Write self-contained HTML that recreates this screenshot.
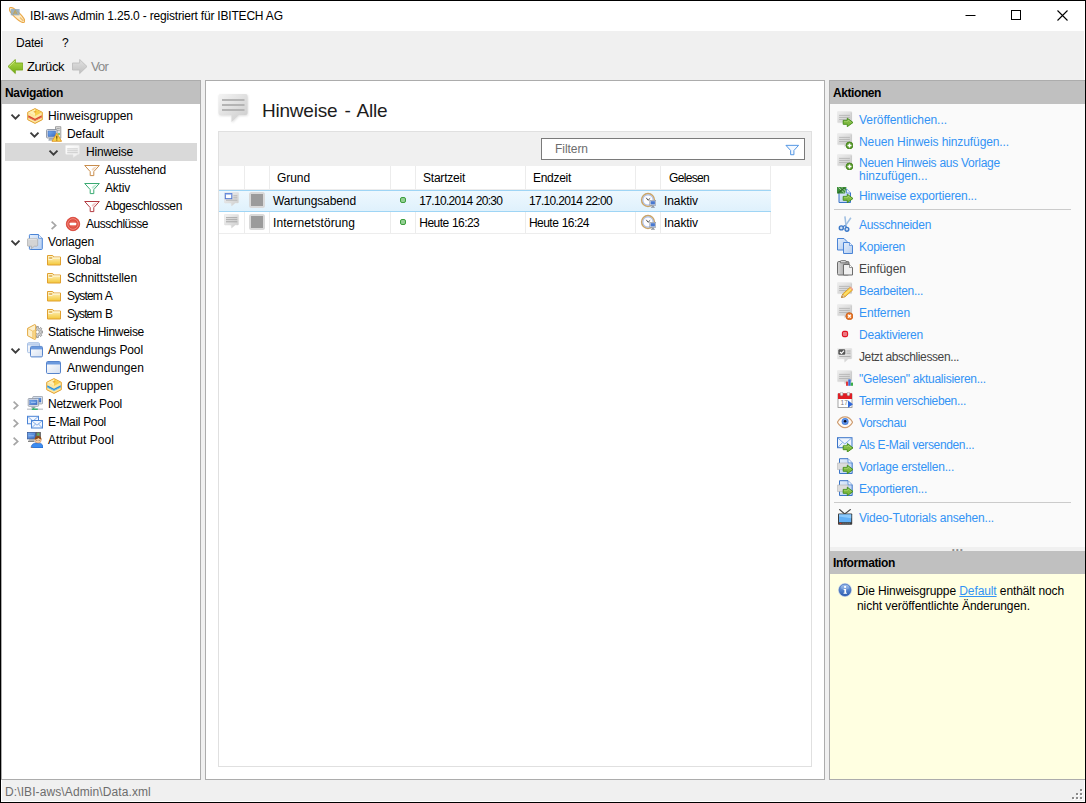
<!DOCTYPE html>
<html lang="de"><head><meta charset="utf-8"><title>IBI-aws Admin</title>
<style>
html,body{margin:0;padding:0}
body{width:1086px;height:803px;position:relative;overflow:hidden;background:#f0f0f0;font-family:"Liberation Sans", sans-serif;font-size:12px;color:#000}
.t{position:absolute;white-space:nowrap}
</style></head><body>
<svg width="0" height="0" style="position:absolute"><defs>
<linearGradient id="gBub" x1="0" y1="0" x2="1" y2="1"><stop offset="0" stop-color="#f4f4f4"/><stop offset="1" stop-color="#cbcbcb"/></linearGradient>
<linearGradient id="gBub2" x1="0" y1="0" x2=".6" y2="1"><stop offset="0" stop-color="#efefef"/><stop offset="1" stop-color="#cacaca"/></linearGradient>
<linearGradient id="gBubW" x1="0" y1="0" x2="1" y2="1"><stop offset="0" stop-color="#ffffff"/><stop offset="1" stop-color="#ececec"/></linearGradient>
<linearGradient id="gFold" x1="0" y1="0" x2="0" y2="1"><stop offset="0" stop-color="#fff6d0"/><stop offset="1" stop-color="#f4c838"/></linearGradient>
<linearGradient id="gGreen" x1="0" y1="0" x2="0" y2="1"><stop offset="0" stop-color="#b4dc50"/><stop offset="1" stop-color="#72ac14"/></linearGradient>
<linearGradient id="gGray" x1="0" y1="0" x2="0" y2="1"><stop offset="0" stop-color="#e2e2e2"/><stop offset="1" stop-color="#c0c0c0"/></linearGradient>
<linearGradient id="gWin" x1="0" y1="0" x2="1" y2="1"><stop offset="0" stop-color="#ffffff"/><stop offset="1" stop-color="#d4dff0"/></linearGradient>
<linearGradient id="gDoc" x1="0" y1="0" x2="1" y2="1"><stop offset="0" stop-color="#e4eefb"/><stop offset="1" stop-color="#b4cdf0"/></linearGradient>
<radialGradient id="gRed" cx=".5" cy=".5" r=".55"><stop offset="0" stop-color="#f07a6a"/><stop offset="1" stop-color="#d83c30"/></radialGradient>
<linearGradient id="gBlue" x1="0" y1="0" x2="0" y2="1"><stop offset="0" stop-color="#7eaae8"/><stop offset="1" stop-color="#2c5cb0"/></linearGradient>
<linearGradient id="gMon" x1="0" y1="0" x2="1" y2="1"><stop offset="0" stop-color="#78aef0"/><stop offset="1" stop-color="#3a6cc4"/></linearGradient>
<linearGradient id="gOr" x1="0" y1="0" x2="1" y2="1"><stop offset="0" stop-color="#fff4d0"/><stop offset="1" stop-color="#f4c060"/></linearGradient>
<linearGradient id="gClip" x1="0" y1="0" x2="1" y2="0"><stop offset="0" stop-color="#d8d8d8"/><stop offset="1" stop-color="#8c8c8c"/></linearGradient>
<linearGradient id="gSel" x1="0" y1="0" x2="0" y2="1"><stop offset="0" stop-color="#f1f9fe"/><stop offset="1" stop-color="#dcf0fc"/></linearGradient>
</defs></svg>
<div style="position:absolute;left:0px;top:0px;width:1086px;height:803px;background:#000;"></div>
<div style="position:absolute;left:1px;top:1px;width:1084px;height:801px;background:#fff;"></div>
<div style="position:absolute;left:2px;top:31px;width:1082px;height:770px;background:#f0f0f0;"></div>
<svg style="position:absolute;left:9px;top:7px;" width="16" height="16" viewBox="0 0 16 16"><ellipse cx="8" cy="8" rx="10.200" ry="3.100" transform="rotate(44 8 8)" fill="#fdebc8" stroke="#eaa848" stroke-width="1"/><rect x="1.800" y="2" width="8.800" height="6.300" fill="#8fa9bd" opacity=".85"/><path d="M4.300 7.300 6.200 3.300 8.100 7.300M5 6h2.400" stroke="#c8a040" stroke-width=".8" fill="none"/><path d="M11 10.500 14.500 14" stroke="#f0c070" stroke-width="1.500"/></svg>
<span id="t1" class="t" style="left:30px;top:7.5px;line-height:16px;letter-spacing:-0.19px;">IBI-aws Admin 1.25.0 - registriert für IBITECH AG</span>
<svg style="position:absolute;left:948px;top:0" width="138" height="30" viewBox="0 0 138 30"><path d="M17.500 15.500h10" stroke="#000" stroke-width="1"/><rect x="63.500" y="10.500" width="9" height="9" fill="none" stroke="#000" stroke-width="1"/><path d="M109.500 10.500l10 10M119.500 10.500l-10 10" stroke="#000" stroke-width="1.100"/></svg>
<span id="t2" class="t" style="left:16px;top:35.0px;line-height:16px;letter-spacing:-0.2px;">Datei</span>
<span id="t3" class="t" style="left:62px;top:35.0px;line-height:16px;">?</span>
<svg style="position:absolute;left:7px;top:59px;" width="16" height="16" viewBox="0 0 16 16"><path d="M8.300 .5 1 7.500l7.300 7V11h7.500V4H8.300z" fill="url(#gGreen)" stroke="#78a81e" stroke-width=".9" stroke-linejoin="round"/><path d="M8 2 2.300 7.500" stroke="#d4ec90" stroke-width=".8" fill="none"/></svg>
<span id="t4" class="t" style="left:27px;top:58.5px;line-height:16px;font-size:13px;letter-spacing:-0.46px;">Zurück</span>
<svg style="position:absolute;left:71px;top:59px;" width="16" height="16" viewBox="0 0 16 16"><path d="M8.700 .5 16 7.500l-7.300 7V11H1.500V4H8.700z" fill="url(#gGray)" stroke="#bdbdbd" stroke-width=".9" stroke-linejoin="round"/></svg>
<span id="t5" class="t" style="left:91px;top:58.5px;line-height:16px;font-size:13px;color:#8a8a8a;letter-spacing:-0.84px;">Vor</span>
<div style="position:absolute;left:1px;top:80px;width:200px;height:700px;background:#acacac;"></div>
<div style="position:absolute;left:2px;top:81px;width:198px;height:698px;background:#fff;"></div>
<div style="position:absolute;left:2px;top:81px;width:198px;height:23px;background:#c0c0c0;"></div>
<span id="t6" class="t" style="left:5px;top:85.0px;line-height:16px;font-weight:bold;letter-spacing:-0.33px;">Navigation</span>
<svg style="position:absolute;left:9px;top:110px" width="12" height="12" viewBox="0 0 12 12"><path d="M2.50 4.70L6.50 8.70L10.50 4.70" fill="none" stroke="#3c3c3c" stroke-width="1.900"/></svg>
<svg style="position:absolute;left:27px;top:108px;" width="16" height="16" viewBox="0 0 16 16"><path d="M8 .600 15.300 4.300v7.400L8 15.400 .7 11.700V4.300z" fill="#fde7a0" stroke="#e0a030" stroke-width="1" stroke-linejoin="round"/>
<path d="M8 1.200 14.600 4.500 8 7.900 1.400 4.500z" fill="#f8cf4c"/><path d="M8 1.200 8 7.900 1.400 4.500z" fill="#fdeeb4"/>
<path d="M1.300 7.300 8 10.700l6.700-3.400v1.900L8 12.600 1.300 9.200z" fill="#d8452e"/>
<path d="M1.300 8.700 8 12.100l6.700-3.400v1L8 13.100 1.300 9.700z" fill="#e87858"/>
<path d="M6.300 3.700 8 2.900l1.700.8L8 4.700z" fill="#e9a52c"/></svg>
<span id="t7" class="t" style="left:48px;top:108.0px;line-height:16px;letter-spacing:-0.08px;">Hinweisgruppen</span>
<svg style="position:absolute;left:28px;top:128px" width="12" height="12" viewBox="0 0 12 12"><path d="M2.50 4.70L6.50 8.70L10.50 4.70" fill="none" stroke="#3c3c3c" stroke-width="1.900"/></svg>
<svg style="position:absolute;left:46px;top:126px;" width="16" height="16" viewBox="0 0 16 16"><path d="M9.500 .7h5.300v11.500H9.500z" fill="#e0e0e0" stroke="#8e8e8e" stroke-width=".8"/><path d="M10.500 2.500h3.300M10.500 4.300h3.300" stroke="#9a9a9a" stroke-width=".8"/><circle cx="13" cy="8" r=".9" fill="#4ab84a"/>
<rect x=".5" y="3.500" width="10.500" height="8.500" rx="1" fill="#dfe3ea" stroke="#7f8896" stroke-width=".8"/><rect x="2" y="5" width="7.500" height="5.500" fill="url(#gMon)" stroke="#3a62b0" stroke-width=".5"/>
<path d="M3.500 12.500h4.500l.8 1.800H2.700z" fill="#b4bac4" stroke="#7f8896" stroke-width=".5"/>
<path d="M10.800 7.200 15.600 15.300H6z" fill="#fbd548" stroke="#e0982a" stroke-width=".9" stroke-linejoin="round"/><path d="M10.800 9.800v3M10.800 13.500v.9" stroke="#6a4200" stroke-width="1.100"/></svg>
<span id="t8" class="t" style="left:67px;top:126.0px;line-height:16px;letter-spacing:-0.15px;">Default</span>
<div style="position:absolute;left:5px;top:143px;width:192px;height:18px;background:#d9d9d9;"></div>
<svg style="position:absolute;left:47px;top:146px" width="12" height="12" viewBox="0 0 12 12"><path d="M2.50 4.70L6.50 8.70L10.50 4.70" fill="none" stroke="#3c3c3c" stroke-width="1.900"/></svg>
<svg style="position:absolute;left:65px;top:144px;" width="16" height="16" viewBox="0 0 16 16"><path d="M1.200 1.200h12.400a.8.800 0 0 1 .8.800v7.600a.8.800 0 0 1-.8.800H12.800L8.300 13.600 8 10.400H1.200a.8.800 0 0 1-.8-.8V2a.8.800 0 0 1 .8-.8z" fill="url(#gBubW)" stroke="#e4e4e4" stroke-width=".4"/>
<path d="M2.200 4.900h10.600M2.200 6.800h10.600M2.200 8.700h10.600" stroke="#bdbdbd" stroke-width=".75"/></svg>
<span id="t9" class="t" style="left:86px;top:144.0px;line-height:16px;letter-spacing:-0.21px;">Hinweise</span>
<svg style="position:absolute;left:84px;top:162px;" width="16" height="16" viewBox="0 0 16 16"><path d="M.7 3.500H15.300L9.800 9.600V13.600H6.200V9.600z" fill="#fff" stroke="#c98d4c" stroke-width="1" stroke-linejoin="miter"/><path d="M9 9 13.200 4.200 9.500 5.500 7.500 7.500z" fill="#e8b888" opacity=".55"/></svg>
<span id="t10" class="t" style="left:105px;top:162.0px;line-height:16px;letter-spacing:-0.24px;">Ausstehend</span>
<svg style="position:absolute;left:84px;top:180px;" width="16" height="16" viewBox="0 0 16 16"><path d="M.7 3.500H15.300L9.800 9.600V13.600H6.200V9.600z" fill="#fff" stroke="#3aaa72" stroke-width="1" stroke-linejoin="miter"/><path d="M9 9 13.200 4.200 9.500 5.500 7.500 7.500z" fill="#8edcb0" opacity=".55"/></svg>
<span id="t11" class="t" style="left:105px;top:180.0px;line-height:16px;letter-spacing:-0.2px;">Aktiv</span>
<svg style="position:absolute;left:84px;top:198px;" width="16" height="16" viewBox="0 0 16 16"><path d="M.7 3.500H15.300L9.800 9.600V13.600H6.200V9.600z" fill="#fff" stroke="#b23a40" stroke-width="1" stroke-linejoin="miter"/><path d="M9 9 13.200 4.200 9.500 5.500 7.500 7.500z" fill="#e89898" opacity=".55"/></svg>
<span id="t12" class="t" style="left:105px;top:198.0px;line-height:16px;letter-spacing:-0.34px;">Abgeschlossen</span>
<svg style="position:absolute;left:47px;top:219px" width="12" height="12" viewBox="0 0 12 12"><path d="M4.60 2.60L8.70 6.40L4.60 10.20" fill="none" stroke="#a6a6a6" stroke-width="1.700"/></svg>
<svg style="position:absolute;left:65px;top:216px;" width="16" height="16" viewBox="0 0 16 16"><circle cx="8" cy="8" r="6.700" fill="#e0483a" stroke="#d8483c" stroke-width=".9"/><circle cx="8" cy="8" r="5.300" fill="url(#gRed)" stroke="#f0958a" stroke-width=".9"/><rect x="4.700" y="6.700" width="6.500" height="2.600" rx=".5" fill="#fff"/></svg>
<span id="t13" class="t" style="left:86px;top:216.0px;line-height:16px;letter-spacing:-0.49px;">Ausschlüsse</span>
<svg style="position:absolute;left:9px;top:236px" width="12" height="12" viewBox="0 0 12 12"><path d="M2.50 4.70L6.50 8.70L10.50 4.70" fill="none" stroke="#3c3c3c" stroke-width="1.900"/></svg>
<svg style="position:absolute;left:27px;top:234px;" width="16" height="16" viewBox="0 0 16 16"><path d="M3.200 .5h8.300l3.800 3.800v10.400a.8.800 0 0 1-.8.800H3.200a.8.800 0 0 1-.8-.8V1.300a.8.800 0 0 1 .8-.8z" fill="url(#gDoc)" stroke="#4a84d6" stroke-width="1"/><path d="M11.500 .5v3.800h3.800" fill="#eef4fd" stroke="#4a84d6" stroke-width=".8"/>
<path d="M1.300 4.700h8.400a1 1 0 0 1 1 1v5.500a1 1 0 0 1-1 1H7.500l-3.200 2.500.4-2.500H1.300a1 1 0 0 1-1-1V5.700a1 1 0 0 1 1-1z" fill="#d4d4d4" stroke="#a6a6a6" stroke-width=".7"/><path d="M1.300 5.300h8.400" stroke="#eee" stroke-width=".8"/></svg>
<span id="t14" class="t" style="left:48px;top:234.0px;line-height:16px;letter-spacing:-0.17px;">Vorlagen</span>
<svg style="position:absolute;left:46px;top:252px;" width="16" height="16" viewBox="0 0 16 16"><path d="M1.500 3.500h5.200l1 1.500H14.500v8H1.500z" fill="url(#gFold)" stroke="#e0a030" stroke-width="1" stroke-linejoin="round"/><path d="M2.300 7.300h4l1.200-1.300h6.500" stroke="#fffbe8" stroke-width="1" fill="none"/><path d="M3.200 6h3" stroke="#c88a28" stroke-width="1"/></svg>
<span id="t15" class="t" style="left:67px;top:252.0px;line-height:16px;letter-spacing:-0.11px;">Global</span>
<svg style="position:absolute;left:46px;top:270px;" width="16" height="16" viewBox="0 0 16 16"><path d="M1.500 3.500h5.200l1 1.500H14.500v8H1.500z" fill="url(#gFold)" stroke="#e0a030" stroke-width="1" stroke-linejoin="round"/><path d="M2.300 7.300h4l1.200-1.300h6.500" stroke="#fffbe8" stroke-width="1" fill="none"/><path d="M3.200 6h3" stroke="#c88a28" stroke-width="1"/></svg>
<span id="t16" class="t" style="left:67px;top:270.0px;line-height:16px;letter-spacing:-0.1px;">Schnittstellen</span>
<svg style="position:absolute;left:46px;top:288px;" width="16" height="16" viewBox="0 0 16 16"><path d="M1.500 3.500h5.200l1 1.500H14.500v8H1.500z" fill="url(#gFold)" stroke="#e0a030" stroke-width="1" stroke-linejoin="round"/><path d="M2.300 7.300h4l1.200-1.300h6.500" stroke="#fffbe8" stroke-width="1" fill="none"/><path d="M3.200 6h3" stroke="#c88a28" stroke-width="1"/></svg>
<span id="t17" class="t" style="left:67px;top:288.0px;line-height:16px;letter-spacing:-0.86px;word-spacing:1.2px;">System A</span>
<svg style="position:absolute;left:46px;top:306px;" width="16" height="16" viewBox="0 0 16 16"><path d="M1.500 3.500h5.200l1 1.500H14.500v8H1.500z" fill="url(#gFold)" stroke="#e0a030" stroke-width="1" stroke-linejoin="round"/><path d="M2.300 7.300h4l1.200-1.300h6.500" stroke="#fffbe8" stroke-width="1" fill="none"/><path d="M3.200 6h3" stroke="#c88a28" stroke-width="1"/></svg>
<span id="t18" class="t" style="left:67px;top:306.0px;line-height:16px;letter-spacing:-0.94px;word-spacing:1.2px;">System B</span>
<svg style="position:absolute;left:27px;top:324px;" width="16" height="16" viewBox="0 0 16 16"><path d="M14.29 7.07 L15.92 7.04 L15.92 8.96 L14.29 8.93 L13.81 10.09 L14.98 11.22 L13.62 12.58 L12.49 11.41 L11.33 11.89 L11.36 13.52 L9.44 13.52 L9.47 11.89 L8.31 11.41 L7.18 12.58 L5.82 11.22 L6.99 10.09 L6.51 8.93 L4.88 8.96 L4.88 7.04 L6.51 7.07 L6.99 5.91 L5.82 4.78 L7.18 3.42 L8.31 4.59 L9.47 4.11 L9.44 2.48 L11.36 2.48 L11.33 4.11 L12.49 4.59 L13.62 3.42 L14.98 4.78 L13.81 5.91z" fill="#cdcdcd" stroke="#8c8c8c" stroke-width=".8" stroke-linejoin="round"/><circle cx="10.4" cy="8.0" r="1.900" fill="#fff" stroke="#8c8c8c" stroke-width=".7"/><path d="M7.800 .5 .6 4.300v7.400L7.800 15.500l.9-.5V1z" fill="#fdf0cc" stroke="#e0a030" stroke-width=".9" stroke-linejoin="round"/><path d="M.9 4.500 5.800 7.200 8.700 5.700M5.800 7.200v7.200" stroke="#ebb654" stroke-width=".7" fill="none"/><path d="M5.800 7.300 8.700 5.800V14.900L5.800 14.300z" fill="#f6cc70" opacity=".75"/></svg>
<span id="t19" class="t" style="left:48px;top:324.0px;line-height:16px;letter-spacing:-0.3px;">Statische Hinweise</span>
<svg style="position:absolute;left:9px;top:344px" width="12" height="12" viewBox="0 0 12 12"><path d="M2.50 4.70L6.50 8.70L10.50 4.70" fill="none" stroke="#3c3c3c" stroke-width="1.900"/></svg>
<svg style="position:absolute;left:27px;top:342px;" width="16" height="16" viewBox="0 0 16 16"><rect x=".5" y=".700" width="12" height="10" rx="1.200" fill="url(#gWin)" stroke="#a8c0e4" stroke-width="1"/><path d="M1 1.200h11v2.300H1z" fill="#bcd0ee"/>
<rect x="3.500" y="4.400" width="12" height="10.500" rx="1.200" fill="url(#gWin)" stroke="#5684cc" stroke-width="1"/><path d="M4 4.900h11v2.500H4z" fill="#6c9ade"/></svg>
<span id="t20" class="t" style="left:48px;top:342.0px;line-height:16px;letter-spacing:-0.12px;">Anwendungs Pool</span>
<svg style="position:absolute;left:46px;top:360px;" width="16" height="16" viewBox="0 0 16 16"><rect x=".5" y="1.500" width="14" height="12" rx="1.200" fill="url(#gWin)" stroke="#5684cc" stroke-width="1"/><path d="M1 2h13v2.500H1z" fill="#6c9ade"/></svg>
<span id="t21" class="t" style="left:67px;top:360.0px;line-height:16px;letter-spacing:0.02px;">Anwendungen</span>
<svg style="position:absolute;left:46px;top:378px;" width="16" height="16" viewBox="0 0 16 16"><path d="M8 .600 15.300 4.300v7.400L8 15.400 .7 11.700V4.300z" fill="#fde7a0" stroke="#e0a030" stroke-width="1" stroke-linejoin="round"/>
<path d="M8 1.200 14.600 4.500 8 7.900 1.400 4.500z" fill="#f8cf4c"/><path d="M8 1.200 8 7.900 1.400 4.500z" fill="#fdeeb4"/>
<path d="M1.300 7.300 8 10.700l6.700-3.400v1.900L8 12.600 1.300 9.200z" fill="#2f8fd8"/>
<path d="M1.300 8.700 8 12.100l6.700-3.400v1L8 13.100 1.300 9.700z" fill="#70c0ec"/>
<path d="M6.300 3.700 8 2.900l1.700.8L8 4.700z" fill="#e9a52c"/></svg>
<span id="t22" class="t" style="left:67px;top:378.0px;line-height:16px;letter-spacing:-0.1px;">Gruppen</span>
<svg style="position:absolute;left:9px;top:399px" width="12" height="12" viewBox="0 0 12 12"><path d="M4.60 2.60L8.70 6.40L4.60 10.20" fill="none" stroke="#a6a6a6" stroke-width="1.700"/></svg>
<svg style="position:absolute;left:27px;top:396px;" width="16" height="16" viewBox="0 0 16 16"><rect x="5.800" y=".4" width="9.800" height="7.500" rx=".8" fill="#e6e9ee" stroke="#8b94a2" stroke-width=".8"/><rect x="7.200" y="1.800" width="7" height="4.500" fill="url(#gMon)"/>
<rect x="1.200" y="2.500" width="10.400" height="7.800" rx=".8" fill="#e6e9ee" stroke="#8b94a2" stroke-width=".8"/><rect x="2.700" y="4" width="7.400" height="4.800" fill="url(#gMon)" stroke="#3f68b8" stroke-width=".4"/><path d="M4 6.300h4.800" stroke="#a8c8f4" stroke-width="1"/>
<path d="M4.800 10.700h3.200l.6 1.300H4.200z" fill="#a0a8b4"/><path d="M0 13.200h16" stroke="#c2c6cc" stroke-width="1.300"/><path d="M4.800 13.200h6M6.500 11.800v1.400" stroke="#3cb470" stroke-width="1.500"/></svg>
<span id="t23" class="t" style="left:48px;top:396.0px;line-height:16px;letter-spacing:-0.26px;">Netzwerk Pool</span>
<svg style="position:absolute;left:9px;top:417px" width="12" height="12" viewBox="0 0 12 12"><path d="M4.60 2.60L8.70 6.40L4.60 10.20" fill="none" stroke="#a6a6a6" stroke-width="1.700"/></svg>
<svg style="position:absolute;left:27px;top:414px;" width="16" height="16" viewBox="0 0 16 16"><rect x=".5" y="2.300" width="11" height="7.500" fill="#f2f7ff" stroke="#4a84d6" stroke-width="1"/><path d="M.8 2.600 6 7l5.200-4.400" fill="none" stroke="#6a9ce0" stroke-width=".8"/>
<rect x="4.500" y="6.500" width="11" height="7.500" fill="#f2f7ff" stroke="#4a84d6" stroke-width="1"/><path d="M4.800 6.800 10 11.200l5.200-4.400M4.800 13.700 8.600 10M15.200 13.700 11.400 10" fill="none" stroke="#6a9ce0" stroke-width=".8"/></svg>
<span id="t24" class="t" style="left:48px;top:414.0px;line-height:16px;letter-spacing:-0.31px;">E-Mail Pool</span>
<svg style="position:absolute;left:9px;top:435px" width="12" height="12" viewBox="0 0 12 12"><path d="M4.60 2.60L8.70 6.40L4.60 10.20" fill="none" stroke="#a6a6a6" stroke-width="1.700"/></svg>
<svg style="position:absolute;left:27px;top:432px;" width="16" height="16" viewBox="0 0 16 16"><rect x=".3" y=".4" width="8.200" height="6.500" fill="url(#gMon)" stroke="#3a5a9a" stroke-width=".8"/><path d="M1.500 3.800h5.500" stroke="#a8c8f4" stroke-width=".7"/>
<rect x="9" y=".2" width="4.500" height="7" fill="#777" stroke="#444" stroke-width=".6"/><rect x="10.500" y="1.300" width="1.500" height="2" fill="#5c5"/>
<path d="M2 7.300h5v1.200H2z" fill="#9a9a9a"/><path d="M1 9.300h6.500" stroke="#777" stroke-width="1.200"/>
<path d="M4.200 15.900c0-3.600 2.400-5 6-5s6 1.400 6 5z" fill="#3c8cf0" stroke="#1c5cc0" stroke-width=".7"/><path d="M4.200 15.900h1.200" stroke="#e08030" stroke-width="1.200"/>
<circle cx="11" cy="7.800" r="3.300" fill="#f8cfa4" stroke="#c08050" stroke-width=".5"/><path d="M7.600 7.400a3.400 3.400 0 0 1 6.800 0c-1.200-.2-2.200-.8-2.800-1.500-.9.900-2.300 1.500-4 1.500z" fill="#8a4a18"/><circle cx="9.900" cy="8.500" r=".45" fill="#333"/><circle cx="12.100" cy="8.500" r=".45" fill="#333"/></svg>
<span id="t25" class="t" style="left:48px;top:432.0px;line-height:16px;letter-spacing:0.05px;">Attribut Pool</span>
<div style="position:absolute;left:205px;top:80px;width:620px;height:700px;background:#acacac;"></div>
<div style="position:absolute;left:206px;top:81px;width:618px;height:698px;background:#fff;"></div>
<svg style="position:absolute;left:217px;top:92px" width="34" height="34" viewBox="0 0 34 34"><defs><filter id="bs" x="-20%" y="-20%" width="140%" height="140%"><feGaussianBlur stdDeviation="0.800"/></filter></defs><path d="M4 3h25a2 2 0 0 1 2 2v17a2 2 0 0 1-2 2H22l-7 7v-7H4a2 2 0 0 1-2-2V5a2 2 0 0 1 2-2z" fill="#cfcfcf" filter="url(#bs)" opacity=".7"/><path d="M3.500 2h25a2 2 0 0 1 2 2v17a2 2 0 0 1-2 2H21.500l-7 7v-7h-11a2 2 0 0 1-2-2V4a2 2 0 0 1 2-2z" fill="url(#gBub)"/><path d="M5 8h22.500M5 13h22.500M5 18h22.500" stroke="#b4b4b4" stroke-width="2"/></svg>
<span id="t26" class="t" style="left:262px;top:97.5px;line-height:26px;font-size:19px;color:#1c1c1c;letter-spacing:-0.22px;word-spacing:2px;">Hinweise - Alle</span>
<div style="position:absolute;left:218px;top:131px;width:594px;height:636px;background:#e0e0e0;"></div>
<div style="position:absolute;left:219px;top:132px;width:592px;height:634px;background:#fff;"></div>
<div style="position:absolute;left:219px;top:132px;width:592px;height:34px;background:#f0f0f0;"></div>
<div style="position:absolute;left:541px;top:138px;width:264px;height:22px;background:#7a7a7a;"></div>
<div style="position:absolute;left:542px;top:139px;width:262px;height:20px;background:#fff;"></div>
<span id="t27" class="t" style="left:555px;top:141.0px;line-height:16px;color:#6d6d6d;letter-spacing:-0.05px;">Filtern</span>
<svg style="position:absolute;left:785px;top:143px;" width="15" height="15" viewBox="0 0 16 16"><path d="M1 2.500H14.500L9.500 8V12.500H6V8z" fill="#f4f9ff" stroke="#4a90e2" stroke-width="1"/></svg>
<div style="position:absolute;left:244px;top:166px;width:1px;height:68px;background:#ececec;"></div>
<div style="position:absolute;left:269px;top:166px;width:1px;height:68px;background:#ececec;"></div>
<div style="position:absolute;left:390px;top:166px;width:1px;height:68px;background:#ececec;"></div>
<div style="position:absolute;left:415px;top:166px;width:1px;height:68px;background:#ececec;"></div>
<div style="position:absolute;left:525px;top:166px;width:1px;height:68px;background:#ececec;"></div>
<div style="position:absolute;left:635px;top:166px;width:1px;height:68px;background:#ececec;"></div>
<div style="position:absolute;left:660px;top:166px;width:1px;height:68px;background:#ececec;"></div>
<div style="position:absolute;left:770px;top:166px;width:1px;height:68px;background:#ececec;"></div>
<div style="position:absolute;left:219px;top:189px;width:552px;height:1px;background:#ececec;"></div>
<div style="position:absolute;left:219px;top:233px;width:552px;height:1px;background:#ededed;"></div>
<div style="position:absolute;left:219px;top:211px;width:552px;height:1px;background:#ededed;"></div>
<span id="t28" class="t" style="left:277px;top:170.0px;line-height:16px;letter-spacing:-0.07px;">Grund</span>
<span id="t29" class="t" style="left:423px;top:170.0px;line-height:16px;letter-spacing:-0.22px;">Startzeit</span>
<span id="t30" class="t" style="left:533px;top:170.0px;line-height:16px;letter-spacing:-0.29px;">Endzeit</span>
<span id="t31" class="t" style="left:669px;top:170.0px;line-height:16px;letter-spacing:-0.67px;">Gelesen</span>
<div style="position:absolute;left:219px;top:190px;width:552px;height:22px;background:#9fd5f5;"></div>
<div style="position:absolute;left:219px;top:191px;width:552px;height:20px;background:linear-gradient(#eef8fe,#dff1fc);"></div>
<svg style="position:absolute;left:224px;top:192px;" width="16" height="16" viewBox="0 0 16 16"><path d="M1.200 .4h12.600a.8.800 0 0 1 .8.800v9a.8.800 0 0 1-.8.800H11.300L7.600 14 7.100 11H1.200a.8.800 0 0 1-.8-.8v-9a.8.800 0 0 1 .8-.8z" fill="url(#gBub)" stroke="#dcdcdc" stroke-width=".5"/><rect x="1.300" y="1.500" width="6.500" height="5.200" fill="#fff" stroke="#4a74d0" stroke-width="1"/><path d="M1.300 2h6.500" stroke="#7a9ee6" stroke-width="1.200"/><path d="M9.300 3.800h4M9.300 5.800h4M2 8.200h11.300" stroke="#b0b0b0" stroke-width=".9"/></svg>
<div style="position:absolute;left:249px;top:192px;width:16px;height:16px;background:#d9d9d9;border-radius:2.5px;"></div>
<div style="position:absolute;left:251px;top:194px;width:12px;height:12px;background:#9b9b9b;"></div>
<div style="position:absolute;left:400px;top:197px;width:4px;height:4px;border-radius:2px;background:#93cf93;border:1px solid #3d9e3d"></div>
<span id="t32" class="t" style="left:273px;top:193.0px;line-height:16px;letter-spacing:-0.1px;">Wartungsabend</span>
<span id="t33" class="t" style="left:419.3px;top:193.0px;line-height:16px;letter-spacing:-0.69px;word-spacing:0.6px;">17.10.2014 20:30</span>
<span id="t34" class="t" style="left:529px;top:193.0px;line-height:16px;letter-spacing:-0.69px;word-spacing:0.6px;">17.10.2014 22:00</span>
<svg style="position:absolute;left:640px;top:192px;" width="16" height="16" viewBox="0 0 16 16"><circle cx="8" cy="8" r="6.400" fill="#fff" stroke="#c9a468" stroke-width="1.500"/><circle cx="8" cy="8" r="5.100" fill="#fdfdff" stroke="#7a9ce4" stroke-width=".7"/><path d="M6.300 5.800 8 8.300 10.200 6.300" stroke="#555" stroke-width="1" fill="none"/><rect x="9.800" y="8.300" width="6" height="5" fill="#d8dce4" stroke="#8a92a0" stroke-width=".6"/><rect x="10.700" y="9.200" width="4.200" height="3.200" fill="#4878d0"/><path d="M11.800 13.500h2.200v1.500h-2.200z" fill="#9aa2ae"/><path d="M11 15.300h3.800" stroke="#7a828e" stroke-width=".8"/></svg>
<span id="t35" class="t" style="left:664px;top:193.0px;line-height:16px;letter-spacing:-0.1px;">Inaktiv</span>
<svg style="position:absolute;left:224px;top:214px;" width="16" height="16" viewBox="0 0 16 16"><path d="M1.200 .4h12.600a.8.800 0 0 1 .8.800v9a.8.800 0 0 1-.8.800H11.300L7.600 14 7.100 11H1.200a.8.800 0 0 1-.8-.8v-9a.8.800 0 0 1 .8-.8z" fill="url(#gBub)" stroke="#dcdcdc" stroke-width=".5"/><path d="M2 3.700h11.300M2 5.700h11.300M2 7.800h11.300" stroke="#a2a2a2" stroke-width=".95"/></svg>
<div style="position:absolute;left:249px;top:214px;width:16px;height:16px;background:#d9d9d9;border-radius:2.5px;"></div>
<div style="position:absolute;left:251px;top:216px;width:12px;height:12px;background:#9b9b9b;"></div>
<div style="position:absolute;left:400px;top:219px;width:4px;height:4px;border-radius:2px;background:#93cf93;border:1px solid #3d9e3d"></div>
<span id="t36" class="t" style="left:273px;top:215.0px;line-height:16px;letter-spacing:0.09px;">Internetstörung</span>
<span id="t37" class="t" style="left:419.3px;top:215.0px;line-height:16px;letter-spacing:-0.55px;word-spacing:0.6px;">Heute 16:23</span>
<span id="t38" class="t" style="left:529px;top:215.0px;line-height:16px;letter-spacing:-0.55px;word-spacing:0.6px;">Heute 16:24</span>
<svg style="position:absolute;left:640px;top:214px;" width="16" height="16" viewBox="0 0 16 16"><circle cx="8" cy="8" r="6.400" fill="#fff" stroke="#c9a468" stroke-width="1.500"/><circle cx="8" cy="8" r="5.100" fill="#fdfdff" stroke="#7a9ce4" stroke-width=".7"/><path d="M6.300 5.800 8 8.300 10.200 6.300" stroke="#555" stroke-width="1" fill="none"/><rect x="9.800" y="8.300" width="6" height="5" fill="#d8dce4" stroke="#8a92a0" stroke-width=".6"/><rect x="10.700" y="9.200" width="4.200" height="3.200" fill="#4878d0"/><path d="M11.800 13.500h2.200v1.500h-2.200z" fill="#9aa2ae"/><path d="M11 15.300h3.800" stroke="#7a828e" stroke-width=".8"/></svg>
<span id="t39" class="t" style="left:664px;top:215.0px;line-height:16px;letter-spacing:-0.1px;">Inaktiv</span>
<div style="position:absolute;left:829px;top:80px;width:256px;height:700px;background:#acacac;"></div>
<div style="position:absolute;left:830px;top:81px;width:255px;height:466px;background:#fafafa;"></div>
<div style="position:absolute;left:830px;top:547px;width:255px;height:4px;background:#f0f0f0;"></div>
<div style="position:absolute;left:830px;top:81px;width:255px;height:23px;background:#c0c0c0;"></div>
<span id="t40" class="t" style="left:833px;top:85.0px;line-height:16px;font-weight:bold;letter-spacing:-0.42px;">Aktionen</span>
<svg style="position:absolute;left:837px;top:111px;" width="16" height="16" viewBox="0 0 16 16"><path d="M1.200 .4h12.800a.8.800 0 0 1 .8.800v9.800a.8.800 0 0 1-.8.800H11.200L7.700 14 7.200 11.800H1.200a.8.800 0 0 1-.8-.8V1.200a.8.800 0 0 1 .8-.8z" fill="url(#gBub2)" stroke="#e2e2e2" stroke-width=".4"/><path d="M14.300 1.500v9.800" stroke="#c2c2c2" stroke-width=".8"/><path d="M2.100 4.400h10.800M2.100 6.450h10.800M2.100 8.500h10.800" stroke="#b0b0b0" stroke-width=".8"/><path d="M10.300 7.200 16 11.500 10.300 15.700V13.300H6.200V9.400H10.300z" fill="#7fb940" stroke="#3f8c14" stroke-width=".9" stroke-linejoin="round"/><path d="M7 10.300h4V9l3.300 2.500" fill="none" stroke="#b4dc80" stroke-width=".6"/></svg>
<span id="t41" class="t" style="left:859px;top:112.0px;line-height:16px;color:#3393f5;letter-spacing:-0.07px;">Veröffentlichen...</span>
<svg style="position:absolute;left:837px;top:133px;" width="16" height="16" viewBox="0 0 16 16"><path d="M1.200 .4h12.800a.8.800 0 0 1 .8.800v9.800a.8.800 0 0 1-.8.800H11.200L7.700 14 7.200 11.800H1.200a.8.800 0 0 1-.8-.8V1.200a.8.800 0 0 1 .8-.8z" fill="url(#gBub2)" stroke="#e2e2e2" stroke-width=".4"/><path d="M14.300 1.500v9.800" stroke="#c2c2c2" stroke-width=".8"/><path d="M2.100 4.400h10.800M2.100 6.450h10.800M2.100 8.500h10.800" stroke="#b0b0b0" stroke-width=".8"/><circle cx="12.500" cy="12.400" r="3.400" fill="#5b9c2c" stroke="#3c7c12" stroke-width=".8"/><path d="M12.500 10.400v4M10.500 12.400h4" stroke="#fff" stroke-width="1.500"/></svg>
<span id="t42" class="t" style="left:859px;top:134.0px;line-height:16px;color:#3393f5;letter-spacing:-0.1px;">Neuen Hinweis hinzufügen...</span>
<svg style="position:absolute;left:837px;top:154px;" width="16" height="16" viewBox="0 0 16 16"><path d="M1.200 .4h12.800a.8.800 0 0 1 .8.800v9.800a.8.800 0 0 1-.8.800H11.200L7.700 14 7.200 11.800H1.200a.8.800 0 0 1-.8-.8V1.200a.8.800 0 0 1 .8-.8z" fill="url(#gBub2)" stroke="#e2e2e2" stroke-width=".4"/><path d="M14.300 1.500v9.800" stroke="#c2c2c2" stroke-width=".8"/><path d="M2.100 4.400h10.800M2.100 6.450h10.800M2.100 8.500h10.800" stroke="#b0b0b0" stroke-width=".8"/><circle cx="12.500" cy="12.400" r="3.400" fill="#5b9c2c" stroke="#3c7c12" stroke-width=".8"/><path d="M12.500 10.400v4M10.500 12.400h4" stroke="#fff" stroke-width="1.500"/></svg>
<span id="t43" class="t" style="left:859px;top:154.5px;line-height:16px;color:#3393f5;letter-spacing:-0.26px;">Neuen Hinweis aus Vorlage</span>
<svg style="position:absolute;left:837px;top:187px;" width="16" height="16" viewBox="0 0 16 16"><path d="M2 2h7.500l4 4V15.500H2z" fill="url(#gDoc)" stroke="#3a74c8" stroke-width="1"/><path d="M9.500 2v4h4" fill="#eef4fd" stroke="#3a74c8" stroke-width=".7"/><path d="M0 0h9.500L8 6.500H0z" fill="#3f8f3c"/><path d="M1.500 .5 7.500 6M4.500 .3 8.500 3.800" stroke="#bfe0b8" stroke-width=".9"/><path d="M7.500 .8 1 6" stroke="#2c6c2a" stroke-width="1.200"/><path d="M10.300 7.200 16 11.500 10.300 15.700V13.300H6.200V9.400H10.300z" fill="#7fb940" stroke="#3f8c14" stroke-width=".9" stroke-linejoin="round"/><path d="M7 10.300h4V9l3.300 2.500" fill="none" stroke="#b4dc80" stroke-width=".6"/></svg>
<span id="t44" class="t" style="left:859px;top:188.0px;line-height:16px;color:#3393f5;letter-spacing:-0.18px;">Hinweise exportieren...</span>
<svg style="position:absolute;left:837px;top:216px;" width="16" height="16" viewBox="0 0 16 16"><path d="M7.900 .4 9 9.300" stroke="#9fbfe2" stroke-width="1.500" fill="none"/><path d="M13.900 1.800 8 10.200" stroke="#9fbfe2" stroke-width="1.500" fill="none"/><path d="M8.300 9.500 6 10.500M8.700 9.800 9.500 11.500" stroke="#3a78c8" stroke-width="1.200"/><circle cx="4.300" cy="11.900" r="2" fill="#cfe0f4" stroke="#3a78c8" stroke-width="1.400"/><circle cx="9.900" cy="13.300" r="1.900" fill="#cfe0f4" stroke="#3a78c8" stroke-width="1.400"/></svg>
<span id="t45" class="t" style="left:859px;top:217.0px;line-height:16px;color:#3393f5;letter-spacing:-0.28px;">Ausschneiden</span>
<svg style="position:absolute;left:837px;top:238px;" width="16" height="16" viewBox="0 0 16 16"><path d="M.5 .5h6.500l3 3v8.500H.5z" fill="url(#gDoc)" stroke="#4a84d6" stroke-width="1"/><path d="M6.500 4.500h6l3 3v8h-9z" fill="url(#gDoc)" stroke="#4a84d6" stroke-width="1"/><path d="M12.500 4.500v3h3" fill="#eef4fd" stroke="#4a84d6" stroke-width=".7"/></svg>
<span id="t46" class="t" style="left:859px;top:239.0px;line-height:16px;color:#3393f5;letter-spacing:-0.26px;">Kopieren</span>
<svg style="position:absolute;left:837px;top:260px;" width="16" height="16" viewBox="0 0 16 16"><rect x=".5" y="1.500" width="11.500" height="13.500" rx="1.300" fill="url(#gClip)" stroke="#6c6c6c" stroke-width="1"/><path d="M3.500 2.800V1.300a.8.800 0 0 1 .8-.8h4a.8.800 0 0 1 .8.800v1.500z" fill="#d4d4d4" stroke="#6c6c6c" stroke-width=".8"/><path d="M6.500 4.500h6l3 3V15h-9z" fill="#f0f0f0" stroke="#6c6c6c" stroke-width="1"/><path d="M12.500 4.500v3h3" fill="#fff" stroke="#6c6c6c" stroke-width=".7"/></svg>
<span id="t47" class="t" style="left:859px;top:261.0px;line-height:16px;color:#444;letter-spacing:-0.05px;">Einfügen</span>
<svg style="position:absolute;left:837px;top:282px;" width="16" height="16" viewBox="0 0 16 16"><path d="M1.200 .4h12.800a.8.800 0 0 1 .8.800v9.800a.8.800 0 0 1-.8.800H11.200L7.700 14 7.200 11.800H1.200a.8.800 0 0 1-.8-.8V1.200a.8.800 0 0 1 .8-.8z" fill="url(#gBub2)" stroke="#e2e2e2" stroke-width=".4"/><path d="M14.300 1.500v9.800" stroke="#c2c2c2" stroke-width=".8"/><path d="M2.100 4.400h10.800M2.100 6.450h10.800M2.100 8.500h10.800" stroke="#b0b0b0" stroke-width=".8"/><path d="M4.500 15.500 5.700 12 13.300 5.200 15.700 7.900 8.100 14.700z" fill="#fad24a" stroke="#d8921e" stroke-width=".8" stroke-linejoin="round"/><path d="M4.500 15.500 5.700 12 8.100 14.700z" fill="#f6dcb8" stroke="#b07830" stroke-width=".5"/><path d="M4.500 15.500 5 14.200 5.800 15.100z" fill="#5a3a1a"/><path d="M13.300 5.200 15.700 7.900" stroke="#f09a8a" stroke-width="1.600"/><path d="M6.900 13.300 14.400 6.500" stroke="#fff0a0" stroke-width=".7"/></svg>
<span id="t48" class="t" style="left:859px;top:283.0px;line-height:16px;color:#3393f5;letter-spacing:-0.31px;">Bearbeiten...</span>
<svg style="position:absolute;left:837px;top:304px;" width="16" height="16" viewBox="0 0 16 16"><path d="M1.200 .4h12.800a.8.800 0 0 1 .8.800v9.800a.8.800 0 0 1-.8.800H11.200L7.700 14 7.200 11.800H1.200a.8.800 0 0 1-.8-.8V1.200a.8.800 0 0 1 .8-.8z" fill="url(#gBub2)" stroke="#e2e2e2" stroke-width=".4"/><path d="M14.300 1.500v9.800" stroke="#c2c2c2" stroke-width=".8"/><path d="M2.100 4.400h10.800M2.100 6.450h10.800M2.100 8.500h10.800" stroke="#b0b0b0" stroke-width=".8"/><circle cx="12.400" cy="12.200" r="3.500" fill="#ea7a2e" stroke="#c85a12" stroke-width=".8"/><path d="M11 10.800l2.800 2.800M13.800 10.800 11 13.600" stroke="#fff" stroke-width="1.300"/></svg>
<span id="t49" class="t" style="left:859px;top:305.0px;line-height:16px;color:#3393f5;letter-spacing:-0.12px;">Entfernen</span>
<svg style="position:absolute;left:837px;top:326px;" width="16" height="16" viewBox="0 0 16 16"><rect x="5.400" y="5.400" width="5.200" height="5.200" rx="1.500" fill="#ec7880" stroke="#e01424" stroke-width="1.100"/></svg>
<span id="t50" class="t" style="left:859px;top:327.0px;line-height:16px;color:#3393f5;letter-spacing:-0.23px;">Deaktivieren</span>
<svg style="position:absolute;left:837px;top:348px;" width="16" height="16" viewBox="0 0 16 16"><path d="M1.200 .2h12.800a.8.800 0 0 1 .8.800v9.200a.8.800 0 0 1-.8.800H11.200L7.700 14.200 7.200 11H1.200a.8.800 0 0 1-.8-.8V1a.8.800 0 0 1 .8-.8z" fill="url(#gBub)" stroke="#e0e0e0" stroke-width=".4"/><rect x="1.300" y="1.300" width="7" height="5.500" rx="1.200" fill="#555"/><path d="M3 4l1.500 1.500L7 2.700" stroke="#fff" stroke-width="1.200" fill="none"/><path d="M9.500 3h4M9.500 5.200h4M2.200 8.500h11.300" stroke="#aaa" stroke-width=".9"/></svg>
<span id="t51" class="t" style="left:859px;top:349.0px;line-height:16px;color:#444;letter-spacing:-0.38px;">Jetzt abschliessen...</span>
<svg style="position:absolute;left:837px;top:370px;" width="16" height="16" viewBox="0 0 16 16"><path d="M1.200 .4h12.800a.8.800 0 0 1 .8.800v9.800a.8.800 0 0 1-.8.800H11.200L7.700 14 7.200 11.800H1.200a.8.800 0 0 1-.8-.8V1.200a.8.800 0 0 1 .8-.8z" fill="url(#gBub2)" stroke="#e2e2e2" stroke-width=".4"/><path d="M14.300 1.500v9.800" stroke="#c2c2c2" stroke-width=".8"/><path d="M2.100 4.400h10.800M2.100 6.450h10.800M2.100 8.500h10.800" stroke="#b0b0b0" stroke-width=".8"/><rect x="9" y="11.600" width="2.300" height="4.200" fill="#e0383c"/><rect x="11.300" y="9.400" width="2.400" height="6.400" fill="#3a6fdc"/><rect x="13.700" y="12.600" width="2.300" height="3.200" fill="#3cae4a"/></svg>
<span id="t52" class="t" style="left:859px;top:371.0px;line-height:16px;color:#3393f5;letter-spacing:-0.27px;">"Gelesen" aktualisieren...</span>
<svg style="position:absolute;left:837px;top:392px;" width="16" height="16" viewBox="0 0 16 16"><rect x="1" y="2" width="14" height="13.500" fill="#fff" stroke="#8e8e8e" stroke-width=".8"/><rect x="1" y="1.300" width="14" height="5.700" fill="#e01e24"/><rect x="3.300" y=".2" width="2.600" height="3.600" rx="1.200" fill="#f0f0f0" stroke="#8a8a8a" stroke-width=".5"/><rect x="10.100" y=".2" width="2.600" height="3.600" rx="1.200" fill="#f0f0f0" stroke="#8a8a8a" stroke-width=".5"/><text x="3.600" y="13.200" font-family="Liberation Sans, sans-serif" font-size="6.500" fill="#777">17</text><path d="M11 8.600 16 12.200 11 15.800z" fill="#3068d8"/></svg>
<span id="t53" class="t" style="left:859px;top:393.0px;line-height:16px;color:#3393f5;letter-spacing:-0.34px;">Termin verschieben...</span>
<svg style="position:absolute;left:837px;top:414px;" width="16" height="16" viewBox="0 0 16 16"><path d="M.4 8.200C2.800 4 5.400 2.800 8 2.800s5.200 1.200 7.600 5.400C13.200 12.400 10.600 13.600 8 13.600S2.800 12.400 .4 8.200z" fill="#fffaf4" stroke="#cf9e72" stroke-width="1.200"/><circle cx="8.100" cy="7.600" r="3.500" fill="#4b83e0"/><circle cx="8.100" cy="7.600" r="2.500" fill="#6ea0ec" opacity=".6"/><circle cx="8.100" cy="7.300" r="1.300" fill="#050a20"/></svg>
<span id="t54" class="t" style="left:859px;top:415.0px;line-height:16px;color:#3393f5;letter-spacing:-0.38px;">Vorschau</span>
<svg style="position:absolute;left:837px;top:436px;" width="16" height="16" viewBox="0 0 16 16"><rect x=".5" y="1.700" width="14.500" height="10" fill="#eef4fd" stroke="#3a74c8" stroke-width="1"/><path d="M.8 2 7.800 8 14.700 2M.8 11.400 5.500 6.500M14.700 11.400 10 6.500" fill="none" stroke="#6a9ce0" stroke-width=".8"/><g transform="translate(0,.4)"><path d="M10.300 7.200 16 11.500 10.300 15.700V13.300H6.200V9.400H10.300z" fill="#7fb940" stroke="#3f8c14" stroke-width=".9" stroke-linejoin="round"/><path d="M7 10.300h4V9l3.300 2.500" fill="none" stroke="#b4dc80" stroke-width=".6"/></g></svg>
<span id="t55" class="t" style="left:859px;top:437.0px;line-height:16px;color:#3393f5;letter-spacing:-0.36px;">Als E-Mail versenden...</span>
<svg style="position:absolute;left:837px;top:458px;" width="16" height="16" viewBox="0 0 16 16"><path d="M2.500 .7h8.500l4.200 4.200V15.500H2.500z" fill="url(#gDoc)" stroke="#3a74c8" stroke-width="1"/><path d="M11 .7v4.200h4.200" fill="#eef4fd" stroke="#3a74c8" stroke-width=".7"/><path d="M1 5h9.200a.8.800 0 0 1 .8.800v5a.8.800 0 0 1-.8.800H1a.8.800 0 0 1-.8-.8v-5A.8.800 0 0 1 1 5z" fill="#dcdcdc" stroke="#b0b0b0" stroke-width=".6"/><path d="M10.300 7.200 16 11.500 10.300 15.700V13.300H6.200V9.400H10.300z" fill="#7fb940" stroke="#3f8c14" stroke-width=".9" stroke-linejoin="round"/><path d="M7 10.300h4V9l3.300 2.500" fill="none" stroke="#b4dc80" stroke-width=".6"/></svg>
<span id="t56" class="t" style="left:859px;top:459.0px;line-height:16px;color:#3393f5;letter-spacing:-0.22px;">Vorlage erstellen...</span>
<svg style="position:absolute;left:837px;top:480px;" width="16" height="16" viewBox="0 0 16 16"><path d="M2.500 .7h8.500l4.200 4.200V15.500H2.500z" fill="url(#gDoc)" stroke="#3a74c8" stroke-width="1"/><path d="M11 .7v4.200h4.200" fill="#eef4fd" stroke="#3a74c8" stroke-width=".7"/><path d="M1 5h9.200a.8.800 0 0 1 .8.800v5a.8.800 0 0 1-.8.800H1a.8.800 0 0 1-.8-.8v-5A.8.800 0 0 1 1 5z" fill="#dcdcdc" stroke="#b0b0b0" stroke-width=".6"/><path d="M10.300 7.200 16 11.500 10.300 15.700V13.300H6.200V9.400H10.300z" fill="#7fb940" stroke="#3f8c14" stroke-width=".9" stroke-linejoin="round"/><path d="M7 10.300h4V9l3.300 2.500" fill="none" stroke="#b4dc80" stroke-width=".6"/></svg>
<span id="t57" class="t" style="left:859px;top:481.0px;line-height:16px;color:#3393f5;letter-spacing:-0.24px;">Exportieren...</span>
<svg style="position:absolute;left:837px;top:509px;" width="16" height="16" viewBox="0 0 16 16"><path d="M2.300 .3 7.700 5 13.700 .3" stroke="#4a4a4a" stroke-width="1.200" fill="none"/><rect x="1" y="4.400" width="14.200" height="11.400" rx=".8" fill="#3c3c3c"/><rect x="2" y="5.400" width="12.200" height="7.800" fill="#62b0f6"/><path d="M2 5.400h12.200v3.800L2 7.400z" fill="#8ccafc"/><path d="M2.500 14.400h2" stroke="#e8382c" stroke-width="1"/><path d="M5.500 14.400h8" stroke="#8a8a8a" stroke-width=".8" stroke-dasharray="1.200 .8"/></svg>
<span id="t58" class="t" style="left:859px;top:510.0px;line-height:16px;color:#3393f5;letter-spacing:-0.17px;">Video-Tutorials ansehen...</span>
<span id="t59" class="t" style="left:859px;top:167.5px;line-height:16px;color:#3393f5;letter-spacing:-0.01px;">hinzufügen...</span>
<div style="position:absolute;left:834px;top:209px;width:237px;height:1px;background:#cbcbcb;"></div>
<div style="position:absolute;left:834px;top:502px;width:237px;height:1px;background:#cbcbcb;"></div>
<span id="t60" class="t" style="left:951.6px;top:538.5px;line-height:16px;font-size:13px;color:#8f8f8f;font-weight:bold;letter-spacing:.35px;">...</span>
<div style="position:absolute;left:830px;top:551px;width:255px;height:23px;background:#c0c0c0;"></div>
<span id="t61" class="t" style="left:833px;top:555.0px;line-height:16px;font-weight:bold;letter-spacing:-0.36px;">Information</span>
<div style="position:absolute;left:830px;top:574px;width:255px;height:205px;background:#ffffe1;"></div>
<svg style="position:absolute;left:837px;top:582px;" width="16" height="16" viewBox="0 0 16 16"><circle cx="8" cy="8" r="6.900" fill="#c6d4ea"/><circle cx="8" cy="8" r="5.900" fill="url(#gBlue)" stroke="#2e5cae" stroke-width=".6"/><ellipse cx="8" cy="5" rx="4.300" ry="2.600" fill="#fff" opacity=".22"/><circle cx="8.100" cy="4.900" r="1.100" fill="#fff"/><path d="M6.700 6.900h2.400v3.800h.8v1H6.500v-1h.9v-2.800H6.700z" fill="#fff"/></svg>
<span id="t62" class="t" style="left:857px;top:583.0px;line-height:16px;letter-spacing:-0.1px;">Die Hinweisgruppe <span style="color:#3393f5;text-decoration:underline">Default</span> enthält noch</span>
<span id="t63" class="t" style="left:857px;top:598.0px;line-height:16px;letter-spacing:-0.07px;">nicht veröffentlichte Änderungen.</span>
<span id="t64" class="t" style="left:5px;top:784.0px;line-height:16px;color:#6d6d6d;letter-spacing:0.1px;">D:\IBI-aws\Admin\Data.xml</span>
<svg style="position:absolute;left:1072px;top:789px" width="12" height="12" viewBox="0 0 12 12"><rect x="9" y="1" width="2" height="2" fill="#fff"/><rect x="5" y="5" width="2" height="2" fill="#fff"/><rect x="9" y="5" width="2" height="2" fill="#fff"/><rect x="1" y="9" width="2" height="2" fill="#fff"/><rect x="5" y="9" width="2" height="2" fill="#fff"/><rect x="9" y="9" width="2" height="2" fill="#fff"/><rect x="8" y="0" width="2" height="2" fill="#8c8c8c"/><rect x="4" y="4" width="2" height="2" fill="#8c8c8c"/><rect x="8" y="4" width="2" height="2" fill="#8c8c8c"/><rect x="0" y="8" width="2" height="2" fill="#8c8c8c"/><rect x="4" y="8" width="2" height="2" fill="#8c8c8c"/><rect x="8" y="8" width="2" height="2" fill="#8c8c8c"/></svg>
<div style="position:absolute;left:1px;top:801px;width:1084px;height:1px;background:#fff;"></div>
</body></html>
